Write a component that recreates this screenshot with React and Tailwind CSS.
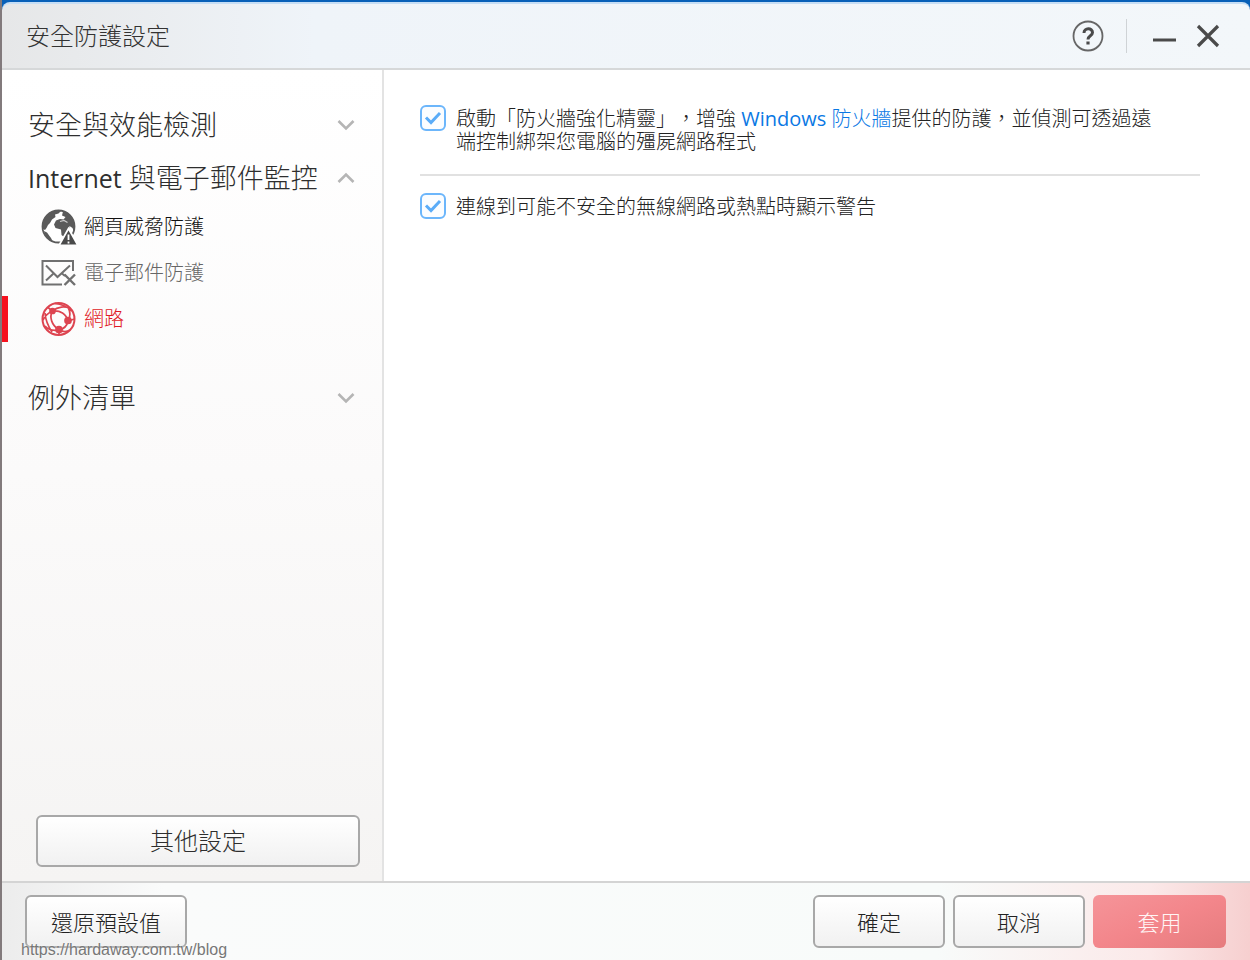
import { useState } from 'react'

function Chevron({ open }) {
  return (
    <svg width="18" height="12" viewBox="0 0 18 12" fill="none" stroke="#b5b5b5" strokeWidth="2.6">
      <path d={open ? 'M1.5 10 9 2.5 16.5 10' : 'M1.5 2 9 9.5 16.5 2'} />
    </svg>
  )
}

function GlobeAlertIcon() {
  return (
    <svg width="36" height="36" viewBox="0 0 36 36" fill="none">
      <circle cx="17.5" cy="17.5" r="16" fill="#fff" stroke="#5a5a5a" strokeWidth="1.8" />
      <path d="M1.500 17C2 9 8 2.500 16 1.500L20 2 17.500 4.500 14 5.500 14.500 8 11 10.500 9 14 7 16 5.500 19 4 21 2 20Z" fill="#5a5a5a" />
      <path d="M3 22 6 23.500 8.500 27 10 29 12 33C7 31 4 27 3 22Z" fill="#5a5a5a" />
      <path d="M22 2.500C29 4 33.500 10 33.500 17L33 23 31.500 19 28.500 17 28 20 25.500 24 23 28 20.500 26 20 20.500 14.500 19 13 15.500 15 11.500 19 10 22.500 10.500 24.500 8 21 6.500Z" fill="#5a5a5a" />
      <path d="M19 12.500 23 11.500 26.500 13.500" stroke="#ccc" strokeWidth="1.2" />
      <path d="M27.500 19.500 37 36.500H18Z" fill="#4a4a4a" stroke="#fff" strokeWidth="1.8" />
      <path d="M27.500 25.500v5.500M27.500 32.500v2" stroke="#fff" strokeWidth="1.8" />
    </svg>
  )
}

function MailBlockedIcon() {
  return (
    <svg width="36" height="28" viewBox="0 0 36 28" fill="none" stroke="#707070" strokeWidth="2">
      <path d="M32 12V2H1.500V25.500H21" />
      <path d="M5 6.500 16.500 18 29 6.500M5 21.500 12 15M21 14.500 24 17" />
      <path d="M23.500 15.500 34 26M34 15.500 23.500 26" strokeWidth="2.4" />
    </svg>
  )
}

function NetworkIcon() {
  return (
    <svg width="36" height="36" viewBox="0 0 36 36" fill="none" stroke="#dd4450" strokeWidth="1.7">
      <circle cx="17.500" cy="18" r="16" strokeWidth="2" />
      <path d="M11.500 10C17 5.500 24 5 29 7.500M11.500 10C19 9 25.500 13 27 20M11.500 10C8 16 10.500 24 18 29M18 29C23 28 26 25 27 20M11.500 10 7 6.500M11.500 10C7 12 4 15 2 19M27 20C29.500 16 29.500 11 27 6M27 20 33.500 18M18 29C12 30 7 28.500 4 25M18 29V34M18 29C22 31 26 31 29 29M4 12C4.500 19 7 25 11 31M14 2.500C20 3 26 5.500 31 10" />
      <circle cx="11.500" cy="10" r="2.500" fill="#dd4450" />
      <circle cx="27" cy="19.500" r="3" fill="#dd4450" />
      <circle cx="18" cy="28.500" r="3" fill="#dd4450" />
    </svg>
  )
}

function SectionHeading({ open, children }) {
  return (
    <button className="flex h-[53px] w-full items-center justify-between pl-[26px] pr-[27px] text-[27px] leading-8 text-[#2e2e2e]" aria-expanded={open}>
      <span>{children}</span>
      <Chevron open={open} />
    </button>
  )
}

const items = [
  { label: '網頁威脅防護', Icon: GlobeAlertIcon, className: 'border-transparent text-[#111]' },
  { label: '電子郵件防護', Icon: MailBlockedIcon, className: 'border-transparent text-[#666]' },
  { label: '網路', Icon: NetworkIcon, className: 'border-[#f5121f] text-[#e01a26]' },
]

function CheckRow({ id, children }) {
  const [checked, setChecked] = useState(true)
  return (
    <div className="flex items-start gap-[10px]">
      <span className="relative h-[26px] w-[26px] shrink-0">
        <input
          id={id}
          type="checkbox"
          checked={checked}
          onChange={(e) => setChecked(e.target.checked)}
          className="block h-[26px] w-[26px] appearance-none rounded-md border-2 border-[#6cb6fb] bg-[#fbfdff]"
        />
        {checked && (
          <svg className="pointer-events-none absolute inset-0" width="26" height="26" viewBox="0 0 26 26" fill="none" stroke="#5aacf8" strokeWidth="3">
            <path d="M6 12.500 11 17.500 20 8" />
          </svg>
        )}
      </span>
      <label htmlFor={id} className="pr-[36px] pt-[2px] text-xl leading-[23px] text-[#222] [text-spacing-trim:space-all]">{children}</label>
    </div>
  )
}

const footerButton = 'h-[53px] rounded-md border-2 border-[#a8a8a8] bg-linear-to-b from-white to-[#f1f1f1] text-[22px] leading-8 text-[#222]'

export default function App() {
  return (
    <div className="relative flex min-h-screen flex-col border-l-2 border-[#827a7c] bg-[#0860b8] pt-[2px] font-['Open_Sans','Noto_Sans_CJK_TC',sans-serif] font-light" lang="zh-Hant">
      <header className="flex h-[68px] items-center justify-between rounded-t-lg border-b-2 border-t-2 border-b-[#d6d8d9] border-t-[#c6def5] bg-linear-to-r from-[#e6e7e8] via-[#eff4f9] via-25% to-[#f3f7fa] pl-[24px] pr-[30px]">
        <h1 className="text-2xl font-light leading-8 text-[#333]">安全防護設定</h1>
        <div className="flex items-center text-[#4a4a4a]">
          <button aria-label="說明">
            <svg width="32" height="32" viewBox="0 0 32 32" fill="none" stroke="currentColor">
              <circle cx="16" cy="16" r="14.500" stroke="#666" strokeWidth="1.800" />
              <path d="M12 13C12 7.500 20.500 7.500 20.500 12.500 20.500 16 16 15.500 16 19.500" strokeWidth="3" />
              <path d="M16 21.500v3" strokeWidth="3.200" />
            </svg>
          </button>
          <span className="ml-[22px] h-[34px] w-px bg-[#cfd3d6]" />
          <button className="ml-[26px]" aria-label="最小化">
            <svg width="23" height="24" viewBox="0 0 23 24" fill="none" stroke="currentColor" strokeWidth="3">
              <path d="M0 16h23" />
            </svg>
          </button>
          <button className="ml-[20px]" aria-label="關閉">
            <svg width="24" height="24" viewBox="0 0 24 24" fill="none" stroke="currentColor" strokeWidth="3.200">
              <path d="M2 2 22 22M22 2 2 22" />
            </svg>
          </button>
        </div>
      </header>

      <div className="flex flex-1 bg-white">
        <nav className="flex w-[382px] shrink-0 flex-col border-r-2 border-[#e3e3e3] bg-linear-to-b from-white via-[#fbfafa] to-[#f5f4f3] pb-[14px] pt-[28px]">
          <SectionHeading open={false}>安全與效能檢測</SectionHeading>
          <SectionHeading open>
            <span className="text-[25px] font-normal">Internet</span> 與電子郵件監控
          </SectionHeading>
          <ul className="mb-[29px]">
            {items.map(({ label, Icon, className }) => (
              <li key={label}>
                <a href="#" className={`flex h-[46px] items-center gap-[7px] border-l-[6px] pl-[33px] text-xl leading-6 ${className}`}>
                  <Icon />
                  <span>{label}</span>
                </a>
              </li>
            ))}
          </ul>
          <SectionHeading open={false}>例外清單</SectionHeading>
          <button className="ml-[34px] mr-[22px] mt-auto h-[52px] rounded-md border-2 border-[#a8a8a8] bg-linear-to-b from-white to-[#f1f1f1] text-2xl font-light leading-8 text-[#2e2e2e]">
            其他設定
          </button>
        </nav>

        <main className="flex-1 pl-[36px] pr-[50px] pt-[35px]">
          <CheckRow id="firewall">
            啟動「防火牆強化精靈」，增強 <a href="#" className="text-[#0a78e4]"><span className="font-normal">Windows</span> 防火牆</a>提供的防護，並偵測可透過遠端控制綁架您電腦的殭屍網路程式
          </CheckRow>
          <hr className="mb-[17px] mt-[21px] border-t-2 border-[#e1e1e1]" />
          <CheckRow id="wireless">連線到可能不安全的無線網路或熱點時顯示警告</CheckRow>
        </main>
      </div>

      <footer className="flex h-[79px] items-start border-t-2 border-[#d4d4d4] bg-[linear-gradient(to_right,#ececec,#fafbfb_13%,#f8fbfa_75%,#fbe9e9_92%,#f6cfcf)] pl-[23px] pr-[24px] pt-[12px]">
        <button className={`w-[162px] ${footerButton}`}>還原預設值</button>
        <div className="ml-auto flex gap-2">
          <button className={`w-[132px] ${footerButton}`}>確定</button>
          <button className={`w-[132px] ${footerButton}`}>取消</button>
          <button className="h-[53px] w-[133px] rounded-md bg-linear-to-br from-[#f59499] via-[#f3868b] to-[#e67c7e] text-[22px] leading-8 text-[#fff5f5]">套用</button>
        </div>
      </footer>

      <p className="absolute bottom-0 left-[19px] font-['Liberation_Sans',sans-serif] text-base font-normal leading-5 text-[#777] [text-shadow:0_0_2px_#fff]">
        https://hardaway.com.tw/blog
      </p>
    </div>
  )
}
